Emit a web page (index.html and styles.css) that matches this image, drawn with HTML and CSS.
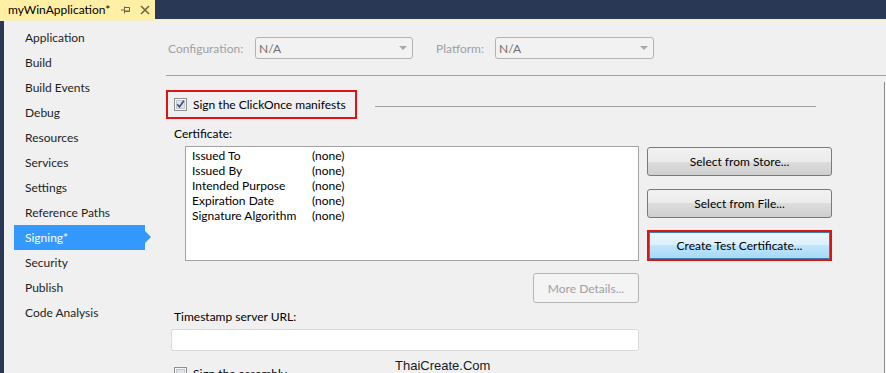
FILE: index.html
```html
<!DOCTYPE html>
<html lang="en">
<head>
  <meta charset="UTF-8">
  <title>myWinApplication - Signing</title>
  <link rel="stylesheet" href="styles.css">
</head>
<body>
  <!-- Document tab strip -->
  <header class="tabbar">
    <div class="tab">
      <span class="tab-title">myWinApplication*</span>
      <svg class="tab-pin" width="10" height="8" viewBox="0 0 10 8">
        <path d="M0 4h3M3.5 0.5v7M3.5 1.5h5v4h-5" stroke="#6e6545" fill="none"/>
        <path d="M4 5h4.5" stroke="#6e6545" fill="none"/>
      </svg>
      <svg class="tab-close" width="10" height="10" viewBox="0 0 10 10">
        <path d="M1 1l8 8M9 1l-8 8" stroke="#6e6545" stroke-width="1.6"/>
      </svg>
    </div>
  </header>
  <div class="tab-line"></div>

  <div class="window">
    <!-- Property pages -->
    <nav class="sidebar">
      <div class="nav-item">Application</div>
      <div class="nav-item">Build</div>
      <div class="nav-item">Build Events</div>
      <div class="nav-item">Debug</div>
      <div class="nav-item">Resources</div>
      <div class="nav-item">Services</div>
      <div class="nav-item">Settings</div>
      <div class="nav-item">Reference Paths</div>
      <div class="nav-item active">Signing*</div>
      <div class="nav-item">Security</div>
      <div class="nav-item">Publish</div>
      <div class="nav-item">Code Analysis</div>
    </nav>

    <main class="content">
      <div class="config-row">
        <span class="config-label">Configuration:</span>
        <div class="combo combo-config"><span>N/A</span><span class="combo-arrow"></span></div>
        <span class="config-label platform-label">Platform:</span>
        <div class="combo combo-platform"><span>N/A</span><span class="combo-arrow"></span></div>
      </div>
      <div class="separator"></div>

      <div class="body">
        <div class="form">
          <!-- Sign manifests -->
          <div class="sign-row">
            <label class="sign-box">
              <svg class="check" width="13" height="13" viewBox="0 0 13 13">
                <rect x="0.5" y="0.5" width="12" height="12" fill="#f6f6f6" stroke="#8e8f8f"/>
                <rect x="2.5" y="2.5" width="8" height="8" fill="#dfe3e8" stroke="#c3c8cf"/>
                <path d="M3.2 6.3l2.3 2.6 4.3-6.2" stroke="#3b4f80" stroke-width="1.7" fill="none"/>
              </svg>
              Sign the ClickOnce manifests
            </label>
            <span class="sign-line"></span>
          </div>

          <div class="field-label cert-label">Certificate:</div>
          <div class="cert-area">
            <div class="cert-list">
              <span>Issued To</span><span>(none)</span>
              <span>Issued By</span><span>(none)</span>
              <span>Intended Purpose</span><span>(none)</span>
              <span>Expiration Date</span><span>(none)</span>
              <span>Signature Algorithm</span><span>(none)</span>
            </div>
            <div class="cert-buttons">
              <button class="btn">Select from Store...</button>
              <button class="btn">Select from File...</button>
              <div class="highlight">
                <button class="btn btn-hot">Create Test Certificate...</button>
              </div>
            </div>
          </div>

          <div class="details-row">
            <button class="btn btn-disabled">More Details...</button>
          </div>

          <div class="field-label url-label">Timestamp server URL:</div>
          <div class="url-input"></div>

          <label class="assembly-row">
            <svg class="check" width="13" height="13" viewBox="0 0 13 13">
              <rect x="0.5" y="0.5" width="12" height="12" fill="#f6f6f6" stroke="#8e8f8f"/>
              <rect x="2.5" y="2.5" width="8" height="8" fill="#dfe3e8" stroke="#c3c8cf"/>
            </svg>
            Sign the assembly
          </label>
        </div>
        <div class="vscroll"></div>
      </div>

      <div class="watermark">ThaiCreate.Com</div>
    </main>
  </div>
</body>
</html>
```

FILE: styles.css
```css
:root {
  --navy: #293955;
  --tab: #fff0a5;
  --panel: #f0f0f0;
  --text: #1e1e1e;
  --muted: #a0a0a0;
  --select: #3399ff;
  --red: #dd1414;
}

* {
  margin: 0;
  padding: 0;
  box-sizing: border-box;
}

body {
  width: 886px;
  height: 373px;
  overflow: hidden;
  background: var(--panel);
  color: var(--text);
  font-family: Lato, "Liberation Sans", sans-serif;
  font-size: 12px;
}

/* Tab strip */
.tabbar {
  height: 19px;
  background: var(--navy);
  display: flex;
}

.tab {
  width: 155px;
  background: var(--tab);
  display: flex;
  align-items: center;
  padding-left: 8px;
  color: #000;
}

.tab-pin {
  margin-left: 11px;
}

.tab-close {
  margin-left: 9px;
}

.tab-line {
  height: 2px;
  background: #f6eec8;
}

.window {
  display: flex;
  height: 352px;
  border-left: 4px solid var(--navy);
}

/* Sidebar */
.sidebar {
  width: 148px;
  padding-top: 4px;
  flex-shrink: 0;
}

.nav-item {
  height: 25px;
  line-height: 25px;
  margin-left: 10px;
  width: 131px;
  padding-left: 11px;
  position: relative;
}

.nav-item.active {
  background: var(--select);
  color: #fff;
}

.nav-item.active::after {
  content: "";
  position: absolute;
  right: -6px;
  top: 6px;
  border-left: 6px solid var(--select);
  border-top: 6px solid transparent;
  border-bottom: 6px solid transparent;
}

/* Content */
.content {
  flex: 1;
  padding-left: 14px;
  position: relative;
}

.config-row {
  display: flex;
  align-items: center;
  margin-top: 16px;
  padding-left: 2px;
  height: 22px;
}

.config-label {
  color: var(--muted);
  width: 87px;
}

.platform-label {
  width: 59px;
  margin-left: 23px;
}

.combo {
  height: 22px;
  border: 1px solid #b4b4b4;
  border-radius: 3px;
  background: #f2f2f2;
  color: #707070;
  display: flex;
  align-items: center;
  justify-content: space-between;
  padding: 0 4px 0 3px;
}

.combo-config {
  width: 158px;
}

.combo-platform {
  width: 159px;
}

.combo-arrow {
  border-top: 4px solid #a8a8a8;
  border-left: 4px solid transparent;
  border-right: 4px solid transparent;
  margin-right: 1px;
}

.separator {
  height: 1px;
  background: #a0a0a0;
  margin-top: 16px;
}

.body {
  display: flex;
}

.form {
  flex: 1;
}

.vscroll {
  width: 2px;
  margin-top: 6px;
  border-left: 1px solid #8c8c8c;
  background: #fafafa;
}

/* Sign group */
.sign-row {
  display: flex;
  align-items: center;
  margin-top: 14px;
}

.sign-box {
  display: flex;
  align-items: center;
  gap: 6px;
  width: 191px;
  height: 29px;
  border: 2px solid var(--red);
  padding-left: 6px;
  color: #000;
}

.sign-line {
  width: 441px;
  height: 1px;
  background: #a0a0a0;
  margin: 3px 0 0 18px;
}

.field-label {
  line-height: 16px;
  padding-left: 8px;
  color: #000;
}

.cert-label {
  margin-top: 7px;
}

.cert-area {
  display: flex;
  gap: 8px;
  margin-top: 4px;
  padding-left: 19px;
}

.cert-list {
  width: 454px;
  height: 115px;
  background: #fff;
  border: 1px solid #a3a3a3;
  padding: 1px 6px;
  display: grid;
  grid-template-columns: 120px auto;
  grid-auto-rows: 15px;
  line-height: 15px;
  color: #000;
}

.cert-buttons {
  width: 185px;
  padding-top: 1px;
  display: flex;
  flex-direction: column;
  gap: 13px;
}

.btn {
  font: inherit;
  color: #000;
  height: 29px;
  width: 100%;
  border: 1px solid #7a7a7a;
  border-radius: 3px;
  background: linear-gradient(#f2f2f2 0%, #ebebeb 50%, #dddddd 50%, #cfcfcf 100%);
}

.highlight {
  border: 2px solid var(--red);
  height: 31px;
  margin-top: -1px;
}

.btn-hot {
  height: 27px;
  border-color: #3c7fb1;
  border-radius: 0;
  background: linear-gradient(#eaf6fd 0%, #d9f0fc 50%, #bee6fd 50%, #a7d9f5 100%);
}

.details-row {
  width: 473px;
  margin-top: 12px;
  display: flex;
  justify-content: flex-end;
}

.btn-disabled {
  width: 106px;
  height: 30px;
  background: #f4f4f4;
  border-color: #b5b5b5;
  color: var(--muted);
}

.url-label {
  margin-top: 6px;
}

.url-input {
  width: 468px;
  height: 22px;
  margin: 4px 0 0 5px;
  background: #fff;
  border: 1px solid #dadada;
  border-radius: 2px;
}

.assembly-row {
  display: flex;
  align-items: center;
  gap: 6px;
  margin: 15px 0 0 8px;
  color: #000;
}

.watermark {
  position: absolute;
  left: 243px;
  top: 337px;
  font-family: "Liberation Sans", sans-serif;
  font-size: 13px;
  color: #1a1a1a;
}
```
